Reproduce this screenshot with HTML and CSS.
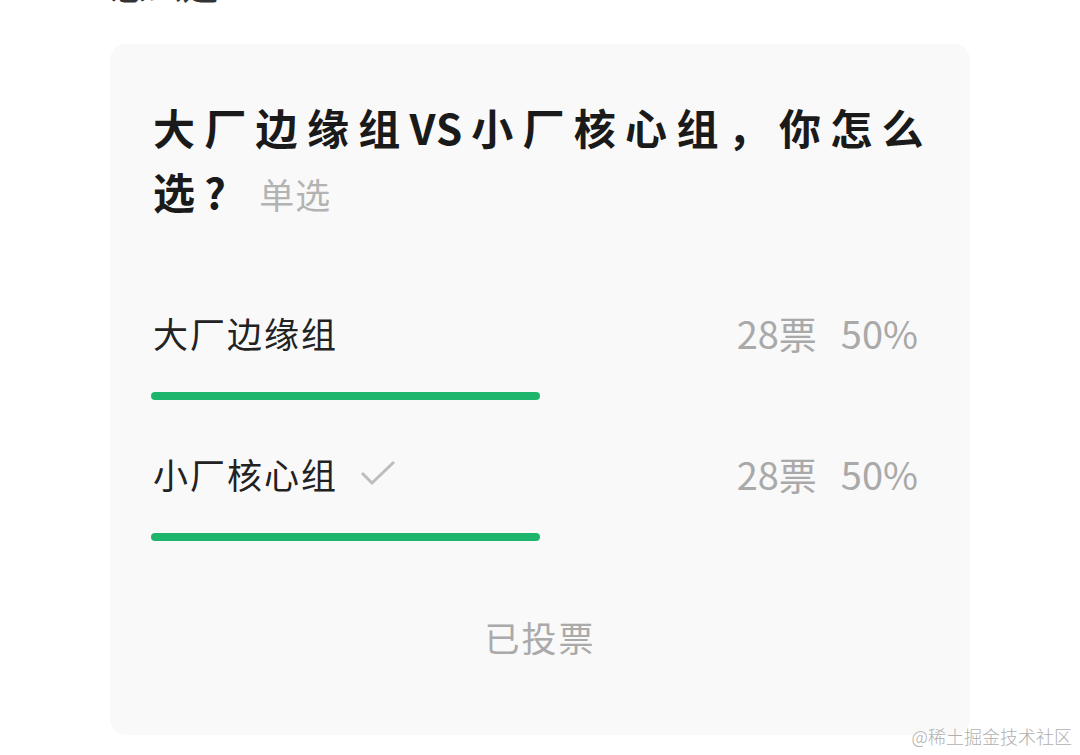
FILE: index.html
```html
<!DOCTYPE html>
<html lang="zh-CN">

<head>
    <meta charset="UTF-8">
    <meta name="viewport" content="width=device-width, initial-scale=1.0">
    <title>投票</title>
    <link rel="stylesheet" href="styles.css">
</head>

<body>
    <div id="page">
        <p class="lead-text">怎么选？</p>

        <div class="vote-card">
            <h2 class="vote-title">大厂边缘组<span class="latin">VS</span>小厂核心组，你怎么选?<span class="vote-type">单选</span></h2>

            <div class="vote-options">
                <div class="vote-option">
                    <div class="option-head">
                        <span class="option-name">大厂边缘组</span>
                        <span class="option-stat">28票<span class="option-pct">50%</span></span>
                    </div>
                    <div class="option-bar"><div class="option-fill" style="width: 50%"></div></div>
                </div>

                <div class="vote-option">
                    <div class="option-head">
                        <span class="option-name">小厂核心组
                            <svg class="check-icon" width="36" height="26" viewBox="0 0 36 26">
                                <path d="M2 13 L12 23 L34 2" fill="none" stroke="#bdbdbd" stroke-width="3" />
                            </svg>
                        </span>
                        <span class="option-stat">28票<span class="option-pct">50%</span></span>
                    </div>
                    <div class="option-bar"><div class="option-fill" style="width: 50%"></div></div>
                </div>
            </div>

            <div class="vote-done">已投票</div>
        </div>
    </div>

    <div class="watermark">@稀土掘金技术社区</div>
</body>

</html>
```

FILE: styles.css
```css
body {
    margin: 0;
    padding: 0;
    background: #ffffff;
    font-family: "Noto Sans CJK SC", "Noto Sans", sans-serif;
    color: #222222;
    height: 755px;
    overflow: hidden;
}

#page {
    padding-left: 110px;
    width: 860px;
}

.lead-text {
    margin: -38px 0 0 0;
    height: 44px;
    font-size: 36px;
    line-height: 44px;
    color: #333333;
    overflow: hidden;
}

.vote-card {
    margin-top: 38px;
    background: #f9f9f9;
    border-radius: 16px;
    padding: 51px 41px 73px 41px;
}

.vote-title {
    margin: 0 -24px 0 2px;
    font-size: 42px;
    line-height: 64px;
    font-weight: 700;
    letter-spacing: 9.3px;
    color: #1a1a1a;
}

.vote-title .latin {
    letter-spacing: 1px;
    margin-right: 8px;
}

.vote-type {
    margin-left: 24px;
    font-size: 35px;
    line-height: 1;
    font-weight: 400;
    letter-spacing: 1px;
    color: #b3b3b3;
}

.vote-options {
    margin-top: 84px;
}

.vote-option + .vote-option {
    margin-top: 48px;
}

.option-head {
    display: flex;
    justify-content: space-between;
    align-items: center;
    height: 50px;
    padding: 0 11px 0 2px;
}

.option-name {
    display: flex;
    align-items: center;
    font-size: 35px;
    letter-spacing: 2px;
    color: #222222;
}

.check-icon {
    margin-left: 22px;
}

.option-stat {
    font-size: 38px;
    color: #a9a9a9;
}

.option-pct {
    margin-left: 24px;
}

.option-bar {
    margin-top: 35px;
    height: 8px;
}

.option-fill {
    height: 100%;
    background: #1db56c;
    border-radius: 4px;
}

.vote-done {
    margin-top: 71px;
    text-align: center;
    font-size: 35px;
    line-height: 50px;
    letter-spacing: 2px;
    color: #aaaaaa;
}

.watermark {
    position: absolute;
    right: 8px;
    bottom: 6px;
    font-family: "Noto Sans CJK SC", sans-serif;
    font-size: 18px;
    font-weight: 300;
    color: #b0b0b0;
}
```
